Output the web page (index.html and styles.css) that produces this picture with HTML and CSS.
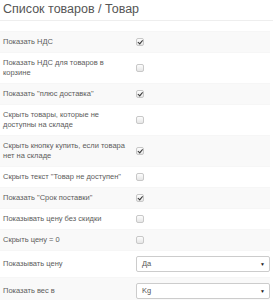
FILE: index.html
```html
<!DOCTYPE html>
<html lang="ru">
<head>
    <meta charset="UTF-8">
    <title>Список товаров / Товар</title>
    <link rel="stylesheet" href="styles.css">
</head>
<body>
    <h3 class="page-header">Список товаров / Товар</h3>
    <table class="settings">
        <tr>
            <td class="label">Показать НДС</td>
            <td><span class="check checked"></span></td>
        </tr>
        <tr>
            <td class="label">Показать НДС для товаров в корзине</td>
            <td><span class="check"></span></td>
        </tr>
        <tr>
            <td class="label">Показать "плюс доставка"</td>
            <td><span class="check checked"></span></td>
        </tr>
        <tr>
            <td class="label">Скрыть товары, которые не доступны на складе</td>
            <td><span class="check"></span></td>
        </tr>
        <tr>
            <td class="label">Скрыть кнопку купить, если товара нет на складе</td>
            <td><span class="check checked"></span></td>
        </tr>
        <tr>
            <td class="label">Скрыть текст "Товар не доступен"</td>
            <td><span class="check"></span></td>
        </tr>
        <tr>
            <td class="label">Показать "Срок поставки"</td>
            <td><span class="check checked"></span></td>
        </tr>
        <tr>
            <td class="label">Показывать цену без скидки</td>
            <td><span class="check"></span></td>
        </tr>
        <tr>
            <td class="label">Скрыть цену = 0</td>
            <td><span class="check"></span></td>
        </tr>
        <tr>
            <td class="label">Показывать цену</td>
            <td><div class="select"><span>Да</span><span class="caret">&#9660;</span></div></td>
        </tr>
        <tr>
            <td class="label">Показать вес в</td>
            <td><div class="select"><span>Kg</span><span class="caret">&#9660;</span></div></td>
        </tr>
    </table>
</body>
</html>
```

FILE: styles.css
```css
body {
    margin: 0;
    font-family: "Liberation Sans", Arial, sans-serif;
    font-size: 7.5px;
    color: #5c5c5c;
    background: #fff;
}

.page-header {
    margin: 0 0 10px 0;
    padding: 2px 3px 4px;
    font-size: 12.5px;
    font-weight: normal;
    line-height: 14px;
    color: #555;
    border-bottom: 1px solid #eee;
}

.settings {
    width: 270px;
    border-collapse: collapse;
}

.settings td {
    padding: 5px 0;
    line-height: 10px;
    vertical-align: middle;
    border-top: 1px solid #f6f6f6;
}

.settings td.label {
    width: 130px;
    padding-left: 3px;
    padding-right: 3px;
}

.settings tr:nth-child(odd) td {
    background-color: #f9f9f9;
}

.check {
    display: block;
    position: relative;
    width: 6px;
    height: 6px;
    border: 1px solid #c8c8c8;
    border-radius: 2px;
    background: linear-gradient(#fdfdfd, #e6e6e6);
}

.check.checked::after {
    content: "";
    position: absolute;
    left: 2px;
    top: 0;
    width: 1.5px;
    height: 3.5px;
    border: solid #333;
    border-width: 0 1.2px 1.2px 0;
    transform: rotate(40deg);
}

.select {
    display: flex;
    justify-content: space-between;
    align-items: center;
    box-sizing: border-box;
    height: 16px;
    padding: 0 4px 0 5px;
    border: 1px solid #ccc;
    border-radius: 2px;
    background: #fff;
    color: #555;
}

.caret {
    font-size: 5px;
    color: #222;
}
```
